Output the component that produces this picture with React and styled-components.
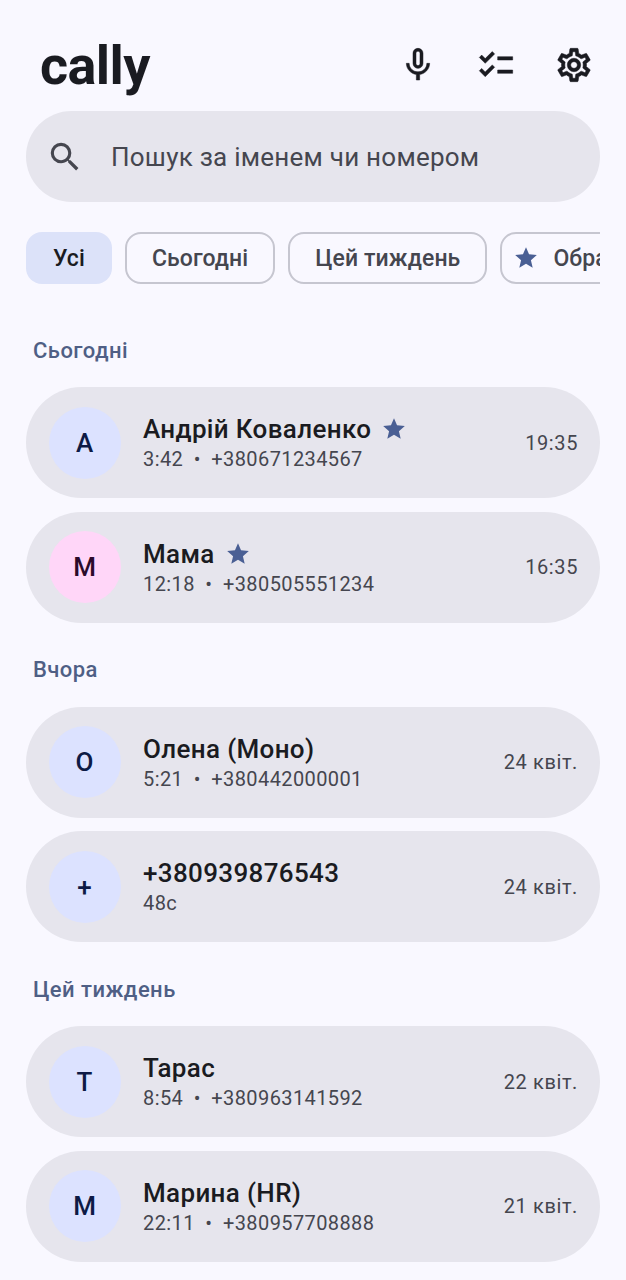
import React from "react";
import styled, { createGlobalStyle } from "styled-components";
import { MdMicNone, MdChecklist, MdOutlineSettings, MdSearch, MdStar } from "react-icons/md";

const Global = createGlobalStyle`
  html, body {
    margin: 0;
    background: #f9f8ff;
    font-family: Roboto, "Noto Sans", sans-serif;
  }
  * { box-sizing: border-box; }
`;

const Page = styled.div`
  width: 626px;
  height: 1280px;
  overflow: hidden;
  padding: 0 26px;
  background: #f9f8ff;
  color: #1a1b21;
`;

const Header = styled.header`
  height: 111px;
  display: flex;
  align-items: center;
  justify-content: space-between;
  padding: 21px 0 0 14px;
`;

const Logo = styled.h1`
  margin: 0;
  font-size: 54px;
  font-weight: 700;
  letter-spacing: -0.6px;
  line-height: 60px;
`;

const Actions = styled.div`
  display: flex;
  align-items: center;
  gap: 38px;
  margin: -2px 6px 0 0;
  font-size: 40px;
  svg {
    display: block;
  }
  path:not([fill="none"]) {
    stroke: currentColor;
    stroke-width: 0.3;
  }
`;

const SearchBar = styled.div`
  height: 91px;
  border-radius: 46px;
  background: #e6e5ed;
  display: flex;
  align-items: center;
  padding: 0 20px;
  gap: 27px;
  color: #45464f;
  font-size: 26px;
  letter-spacing: 0.24px;
`;

const Chips = styled.div`
  display: flex;
  gap: 13px;
  margin-top: 30px;
  overflow: hidden;
`;

const Chip = styled.div`
  flex: none;
  height: 52px;
  display: flex;
  align-items: center;
  gap: 14px;
  padding: ${(p) => (p.$icon ? "0 25px 0 11px" : p.$active ? "0 27px" : "0 25px")};
  border-radius: 16px;
  font-size: 23px;
  font-weight: 500;
  letter-spacing: 0.1px;
  background: ${(p) => (p.$active ? "#dce2f9" : "transparent")};
  color: ${(p) => (p.$active ? "#1a1b21" : "#45464f")};
  border: ${(p) => (p.$active ? "none" : "2px solid #c6c6d0")};
`;

const SectionTitle = styled.h2`
  margin: 0;
  padding: ${(p) => (p.$first ? "52.5px" : "33.5px")} 0 22.5px 7px;
  font-size: 22px;
  line-height: 28px;
  font-weight: 500;
  letter-spacing: 0.45px;
  color: #4f5f85;
`;

const List = styled.div`
  display: flex;
  flex-direction: column;
  gap: 13.5px;
`;

const Card = styled.div`
  height: 111px;
  border-radius: 56px;
  background: #e6e5ed;
  display: flex;
  align-items: center;
  padding: 0 22px 0 22.5px;
  gap: 22.5px;
`;

const Avatar = styled.div`
  flex: none;
  width: 72px;
  height: 72px;
  border-radius: 50%;
  display: flex;
  align-items: center;
  justify-content: center;
  font-size: 26px;
  font-weight: 500;
  background: ${(p) => (p.$pink ? "#ffd6f8" : "#dce2ff")};
  color: ${(p) => (p.$pink ? "#2b0a2a" : "#0d1a45")};
`;

const Info = styled.div`
  flex: 1;
  min-width: 0;
  display: flex;
  flex-direction: column;
  gap: 2px;
  margin-top: 1px;
`;

const NameRow = styled.div`
  display: flex;
  align-items: center;
  gap: 10px;
  font-size: 26px;
  line-height: 30px;
  font-weight: 500;
  letter-spacing: 0.35px;
  color: #1a1b21;
`;

const Meta = styled.div`
  display: flex;
  gap: 10.5px;
  font-size: 20px;
  line-height: 26px;
  letter-spacing: 0.4px;
  color: #45464f;
`;

const Time = styled.div`
  flex: none;
  font-size: 20px;
  letter-spacing: 0.6px;
  color: #45464f;
`;

const StarIcon = styled(MdStar)`
  flex: none;
  color: #4a5f94;
  font-size: 26px;
`;

const sections = [
  {
    title: "Сьогодні",
    calls: [
      { letter: "А", name: "Андрій Коваленко", star: true, meta: ["3:42", "+380671234567"], time: "19:35" },
      { letter: "М", name: "Мама", star: true, pink: true, meta: ["12:18", "+380505551234"], time: "16:35" },
    ],
  },
  {
    title: "Вчора",
    calls: [
      { letter: "О", name: "Олена (Моно)", meta: ["5:21", "+380442000001"], time: "24 квіт." },
      { letter: "+", name: "+380939876543", meta: ["48с"], time: "24 квіт." },
    ],
  },
  {
    title: "Цей тиждень",
    calls: [
      { letter: "Т", name: "Тарас", meta: ["8:54", "+380963141592"], time: "22 квіт." },
      { letter: "М", name: "Марина (HR)", meta: ["22:11", "+380957708888"], time: "21 квіт." },
    ],
  },
];

function CallCard({ call }) {
  return (
    <Card>
      <Avatar $pink={call.pink}>{call.letter}</Avatar>
      <Info>
        <NameRow>
          {call.name}
          {call.star && <StarIcon />}
        </NameRow>
        <Meta>
          {call.meta.map((part, i) => (
            <React.Fragment key={part}>
              {i > 0 && <span>•</span>}
              <span>{part}</span>
            </React.Fragment>
          ))}
        </Meta>
      </Info>
      <Time>{call.time}</Time>
    </Card>
  );
}

export default function App() {
  return (
    <Page>
      <Global />
      <Header>
        <Logo>cally</Logo>
        <Actions>
          <MdMicNone />
          <MdChecklist />
          <MdOutlineSettings />
        </Actions>
      </Header>
      <SearchBar>
        <MdSearch size={38} />
        Пошук за іменем чи номером
      </SearchBar>
      <Chips>
        <Chip $active>Усі</Chip>
        <Chip>Сьогодні</Chip>
        <Chip>Цей тиждень</Chip>
        <Chip $icon>
          <StarIcon />
          Обране
        </Chip>
      </Chips>
      {sections.map((section, i) => (
        <section key={section.title}>
          <SectionTitle $first={i === 0}>{section.title}</SectionTitle>
          <List>
            {section.calls.map((call) => (
              <CallCard key={call.name} call={call} />
            ))}
          </List>
        </section>
      ))}
    </Page>
  );
}
